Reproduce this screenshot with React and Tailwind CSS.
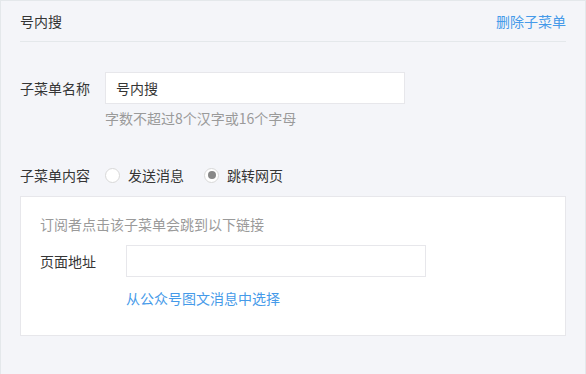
export default function App() {
  const font = { fontFamily: '"Noto Sans CJK SC", "Liberation Sans", sans-serif' };
  return (
    <div className="h-[374px] w-[586px] bg-[#f4f5f9] border-t border-l border-r border-[#e4e8eb] px-[19px] text-[14px] text-[#353535]" style={font}>
      {/* header */}
      <div className="flex h-[41px] items-center justify-between border-b border-[#e4e8eb]">
        <span className="leading-5">号内搜</span>
        <a className="leading-5 text-[#459ae9]">删除子菜单</a>
      </div>

      {/* name */}
      <div className="mt-[30px] flex">
        <div className="w-[85px] h-[32px] flex items-center leading-5">子菜单名称</div>
        <div>
          <div className="flex h-[32px] w-[300px] items-center border border-[#e7e7eb] bg-white px-[10px] leading-5">号内搜</div>
          <div className="mt-1 leading-5 text-[#9a9a9a]">字数不超过8个汉字或16个字母</div>
        </div>
      </div>

      {/* content type */}
      <div className="mt-[37px] flex h-5 items-center leading-5">
        <span className="w-[85px]">子菜单内容</span>
        <label className="flex items-center">
          <span className="box-border h-[15px] w-[15px] rounded-full border border-[#d8d8d8] bg-white" />
          <span className="ml-2">发送消息</span>
        </label>
        <label className="ml-[20px] flex items-center">
          <span className="box-border flex h-[15px] w-[15px] items-center justify-center rounded-full border border-[#d8d8d8] bg-white">
            <span className="h-[8px] w-[8px] rounded-full bg-[#888]" />
          </span>
          <span className="ml-2">跳转网页</span>
        </label>
      </div>

      {/* url box */}
      <div className="mt-[11px] border border-[#e7e7eb] bg-white px-[19px] pt-[17px] pb-[27px]">
        <div className="leading-5 text-[#9a9a9a]">订阅者点击该子菜单会跳到以下链接</div>
        <div className="mt-[11px] flex">
          <div className="w-[86px] h-[32px] flex items-center leading-5">页面地址</div>
          <div>
            <div className="h-[32px] w-[300px] border border-[#e7e7eb] bg-white" />
            <a className="mt-[11px] block leading-5 text-[#459ae9]">从公众号图文消息中选择</a>
          </div>
        </div>
      </div>
    </div>
  );
}
